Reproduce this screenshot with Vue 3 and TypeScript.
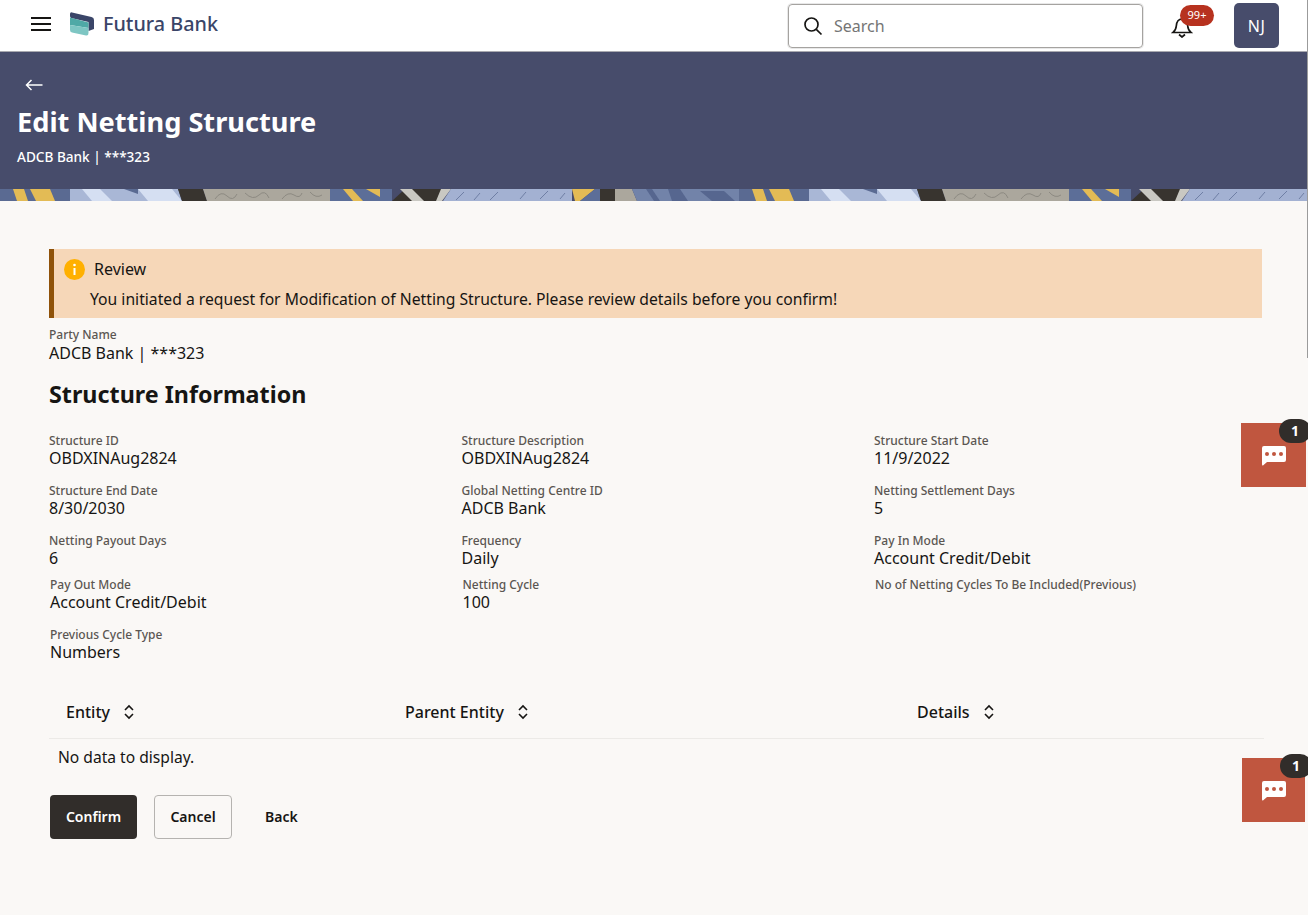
<script setup lang="ts">
interface Field {
  label: string;
  value: string;
}

interface Shape {
  points: string;
  fill: string;
}

const fieldsTop: Field[] = [
  { label: 'Structure ID', value: 'OBDXINAug2824' },
  { label: 'Structure Description', value: 'OBDXINAug2824' },
  { label: 'Structure Start Date', value: '11/9/2022' },
  { label: 'Structure End Date', value: '8/30/2030' },
  { label: 'Global Netting Centre ID', value: 'ADCB Bank' },
  { label: 'Netting Settlement Days', value: '5' },
  { label: 'Netting Payout Days', value: '6' },
  { label: 'Frequency', value: 'Daily' },
  { label: 'Pay In Mode', value: 'Account Credit/Debit' },
];

const fieldsBottom: Field[] = [
  { label: 'Pay Out Mode', value: 'Account Credit/Debit' },
  { label: 'Netting Cycle', value: '100' },
  { label: 'No of Netting Cycles To Be Included(Previous)', value: '' },
  { label: 'Previous Cycle Type', value: 'Numbers' },
];

const columns = ['Entity', 'Parent Entity', 'Details'];

// the banner strip repeats every 739px
const tileOffsets = [0, 739];

const tile: Shape[] = [
  { points: '0,0 70,0 70,12 0,12', fill: '#5a6a92' },
  { points: '13,0 24,0 28,12 17,12', fill: '#e3bb55' },
  { points: '30,0 50,0 55,12 36,12', fill: '#e3bb55' },
  { points: '70,0 178,0 182,12 70,12', fill: '#a9b7d6' },
  { points: '82,0 100,0 112,12 92,12', fill: '#d5dff2' },
  { points: '138,0 172,0 182,12 148,12', fill: '#d5dff2' },
  { points: '124,0 138,0 138,5', fill: '#5a6a92' },
  { points: '178,0 203,0 207,12 182,12', fill: '#38342f' },
  { points: '203,0 330,0 330,12 207,12', fill: '#aba79d' },
  { points: '330,0 392,0 392,12 330,12', fill: '#5c6e98' },
  { points: '343,0 352,0 363,12 353,12', fill: '#e3bb55' },
  { points: '366,0 380,0 380,8', fill: '#e3bb55' },
  { points: '392,12 405,0 445,0 442,12', fill: '#38342f' },
  { points: '400,0 412,0 424,12 412,12', fill: '#c9c8c2' },
  { points: '441,0 451,0 442,12 436,12', fill: '#c9c8c2' },
  { points: '451,0 572,0 572,12 443,12', fill: '#a3b1d2' },
  { points: '572,0 595,0 580,12 575,12', fill: '#e3bb55' },
  { points: '595,0 600,0 600,12 580,12', fill: '#5c6e98' },
  { points: '600,0 615,0 615,12 600,12', fill: '#38342f' },
  { points: '615,0 632,0 637,12 615,12', fill: '#aba79d' },
  { points: '632,0 739,0 739,12 637,12', fill: '#7283a9' },
  { points: '646,0 652,0 660,12 654,12', fill: '#56668f' },
  { points: '668,0 680,0 688,12 672,12', fill: '#56668f' },
  { points: '700,2 724,2 735,12 712,12', fill: '#56668f' },
];

// thin squiggles on the grey blocks and hatching on the pale blue ones
const squiggles = [
  'M215 10q6-9 12-3t10-2',
  'M245 4q8 8 14 2t10 3',
  'M282 10q6-8 12-4t8-2',
  'M310 3q6 7 12 3',
];
const hatches = [
  'M456 11l8-8',
  'M474 11l6-7',
  'M490 11l8-8',
  'M520 10l6-7',
  'M540 10l8-8',
  'M560 10l5-6',
];
</script>

<template>
  <div class="page">
    <header class="topbar">
      <button class="menu-btn" aria-label="Menu">
        <svg width="22" height="16" viewBox="0 0 22 16">
          <path d="M1 2h20M1 8h20M1 14h20" stroke="#161513" stroke-width="2" fill="none" />
        </svg>
      </button>
      <div class="brand">
        <svg class="brand-mark" width="24" height="24" viewBox="0 0 24 24">
          <path d="M0 2Q0 0 2 .4L21.500 5Q24 5.600 24 8V17L18.500 19V10L1 6Q0 5 0 4z" fill="#3a4568" />
          <path d="M0 5.500 18.500 10.500V16L0 13z" fill="#4fa9a6" />
          <path d="M0 13 18.500 16V21Q18.500 24 16 23.500L2 20.500Q0 20 0 18z" fill="#7ec6c3" />
        </svg>
        <span class="brand-name">Futura Bank</span>
      </div>
      <div class="search">
        <svg width="20" height="20" viewBox="0 0 20 20">
          <circle cx="8.500" cy="8.500" r="6.500" stroke="#161513" stroke-width="1.700" fill="none" />
          <path d="M13.300 13.300 18.500 18.500" stroke="#161513" stroke-width="1.700" fill="none" />
        </svg>
        <span class="search-text">Search</span>
      </div>
      <div class="bell">
        <svg width="22" height="24" viewBox="0 0 22 24">
          <path d="M2 18.500h18c-2-1.500-3-3-3.300-6.500-.3-4-2.300-7-5.700-7s-5.400 3-5.700 7c-.3 3.500-1.300 5-3.300 6.500z" stroke="#161513" stroke-width="1.700" fill="none" />
          <path d="M8 20.500l3 2.500 3-2.500" stroke="#161513" stroke-width="1.700" fill="none" />
        </svg>
        <span class="bell-badge">99+</span>
      </div>
      <div class="avatar">NJ</div>
    </header>

    <section class="hero">
      <div class="hero-body">
        <svg class="back-arrow" width="18" height="12" viewBox="0 0 18 12">
          <path d="M17.500 6H1.500M6.500 1 1.500 6l5 5" stroke="#fff" stroke-width="1.500" fill="none" />
        </svg>
        <h1 class="hero-title">Edit Netting Structure</h1>
        <p class="hero-sub">ADCB Bank | ***323</p>
      </div>
      <svg class="hero-strip" width="1308" height="12" viewBox="0 0 1308 12">
        <g v-for="x in tileOffsets" :key="x" :transform="`translate(${x} 0)`">
          <polygon v-for="(s, i) in tile" :key="i" :points="s.points" :fill="s.fill" />
          <path v-for="d in squiggles" :key="d" :d="d" stroke="#8d8a82" stroke-width="1" fill="none" />
          <path v-for="d in hatches" :key="d" :d="d" stroke="#6f7fa5" stroke-width="1" fill="none" />
        </g>
      </svg>
    </section>

    <main class="content">
      <div class="review">
        <div class="review-head">
          <svg width="21" height="21" viewBox="0 0 21 21">
            <circle cx="10.500" cy="10.500" r="10.500" fill="#ffb000" />
            <rect x="9.500" y="9" width="2" height="7" fill="#fff" />
            <circle cx="10.500" cy="6" r="1.300" fill="#fff" />
          </svg>
          <span>Review</span>
        </div>
        <p class="review-text">You initiated a request for Modification of Netting Structure. Please review details before you confirm!</p>
      </div>

      <div class="field party">
        <span class="field-label">Party Name</span>
        <span class="field-value">ADCB Bank | ***323</span>
      </div>

      <h2 class="section-title">Structure Information</h2>

      <div class="field-grid">
        <div v-for="f in fieldsTop" :key="f.label" class="field">
          <span class="field-label">{{ f.label }}</span>
          <span class="field-value">{{ f.value }}</span>
        </div>
      </div>
      <div class="field-grid field-grid-lower">
        <div v-for="f in fieldsBottom" :key="f.label" class="field">
          <span class="field-label">{{ f.label }}</span>
          <span class="field-value">{{ f.value }}</span>
        </div>
      </div>

      <div class="table">
        <div class="table-head">
          <div v-for="c in columns" :key="c" class="table-col">
            <span>{{ c }}</span>
            <svg width="12" height="16" viewBox="0 0 12 16">
              <path d="M2 6l4-4 4 4M2 10l4 4 4-4" stroke="#161513" stroke-width="1.600" fill="none" />
            </svg>
          </div>
        </div>
        <div class="table-empty">No data to display.</div>
      </div>

      <div class="actions">
        <button class="btn btn-primary">Confirm</button>
        <button class="btn btn-outline">Cancel</button>
        <button class="btn btn-ghost">Back</button>
      </div>
    </main>

    <div class="chat chat-top">
      <svg width="26" height="21" viewBox="0 0 26 21">
        <path d="M3 1h20q2 0 2 2v12q0 2-2 2H6l-4 3.500Q1 21 1 19V3q0-2 2-2z" fill="#fff" />
        <circle cx="6" cy="9" r="2" fill="#c0563f" />
        <circle cx="13" cy="9" r="2" fill="#c0563f" />
        <circle cx="20" cy="9" r="2" fill="#c0563f" />
      </svg>
      <span class="chat-badge">1</span>
    </div>
    <div class="chat chat-bottom">
      <svg width="26" height="21" viewBox="0 0 26 21">
        <path d="M3 1h20q2 0 2 2v12q0 2-2 2H6l-4 3.500Q1 21 1 19V3q0-2 2-2z" fill="#fff" />
        <circle cx="6" cy="9" r="2" fill="#c0563f" />
        <circle cx="13" cy="9" r="2" fill="#c0563f" />
        <circle cx="20" cy="9" r="2" fill="#c0563f" />
      </svg>
      <span class="chat-badge">1</span>
    </div>
    <div class="scroll-thumb"></div>
  </div>
</template>

<style>
html,
body {
  margin: 0;
  background: #faf8f6;
}
</style>

<style scoped>
.page {
  position: relative;
  width: 1308px;
  height: 915px;
  overflow: hidden;
  font-family: 'Noto Sans', 'Open Sans', sans-serif;
  color: #161513;
  background: #faf8f6;
}

.topbar {
  height: 51px;
  display: flex;
  align-items: center;
  background: #fff;
  border-bottom: 1px solid #a9a9b0;
  padding-left: 30px;
  padding-right: 29px;
}

.menu-btn {
  width: 22px;
  height: 16px;
  padding: 0;
  border: none;
  background: none;
  display: flex;
  margin-top: -3px;
}

.brand {
  display: flex;
  align-items: center;
  gap: 9px;
  margin-left: 18px;
  margin-top: -4px;
}

.brand-name {
  font-size: 19.800px;
  font-weight: 500;
  color: #3a4568;
}

.search {
  width: 355px;
  height: 44px;
  box-sizing: border-box;
  margin-left: auto;
  display: flex;
  align-items: center;
  gap: 11px;
  padding-left: 14px;
  border: 1px solid #a5a3a0;
  border-radius: 4px;
  box-shadow: 0 0 0 1px #e8e8e8;
}

.search-text {
  font-size: 16px;
  color: #757575;
}

.bell {
  position: relative;
  width: 22px;
  height: 24px;
  margin-left: 28px;
}

.bell-badge {
  position: absolute;
  left: 9px;
  top: -9px;
  width: 34px;
  height: 21px;
  border-radius: 11px;
  background: #b7321f;
  color: #fff;
  font-size: 11px;
  line-height: 20px;
  text-align: center;
}

.avatar {
  width: 45px;
  height: 45px;
  margin-left: 41px;
  border-radius: 5px;
  background: #474c6b;
  color: #fff;
  font-size: 16px;
  letter-spacing: 0.5px;
  display: flex;
  align-items: center;
  justify-content: center;
}

.hero {
  background: #474c6b;
  color: #fff;
}

.hero-body {
  height: 137px;
  box-sizing: border-box;
  padding: 27px 17px 0;
}

.back-arrow {
  display: block;
  margin-left: 8px;
}

.hero-title {
  margin: 11px 0 0;
  font-size: 27.200px;
  line-height: 40px;
  font-weight: 700;
}

.hero-sub {
  margin: 5px 0 0;
  font-size: 13.600px;
  line-height: 20px;
  font-weight: 500;
}

.hero-strip {
  display: block;
}

.content {
  padding: 48px 44px 0 49px;
}

.review {
  height: 69px;
  box-sizing: border-box;
  border-left: 5px solid #8f5209;
  background: #f6d7b8;
  padding-top: 9px;
  padding-left: 10px;
  margin-right: 2px;
}

.review-head {
  display: flex;
  align-items: center;
  gap: 9px;
  font-size: 16px;
  line-height: 22px;
}

.review-text {
  margin: 8px 0 0 26px;
  font-size: 15.700px;
  line-height: 22px;
}

.field {
  display: flex;
  flex-direction: column;
  height: 50px;
}

.party {
  margin-top: 9px;
  height: auto;
}

.field-label {
  font-size: 12px;
  line-height: 16px;
  font-weight: 500;
  color: #5b5652;
}

.field-value {
  font-size: 16px;
  line-height: 20px;
}

.section-title {
  margin: 14px 0 0;
  font-size: 23.300px;
  line-height: 34px;
  font-weight: 700;
}

.field-grid {
  display: grid;
  grid-template-columns: repeat(3, 412.500px);
  margin-top: 22px;
}

.field-grid .field-value {
  margin-top: -1px;
}

.field-grid-lower {
  margin-top: -6px;
  padding-left: 1px;
}

.table {
  width: 1215px;
  margin-top: 8px;
}

.table-head {
  height: 54px;
  display: grid;
  grid-template-columns: 339px 512px 1fr;
  padding-left: 17px;
  border-bottom: 1px solid #eceae7;
  box-sizing: border-box;
}

.table-col {
  display: flex;
  align-items: center;
  gap: 13px;
  font-size: 16px;
  font-weight: 500;
}

.table-empty {
  padding-left: 9px;
  font-size: 15.600px;
  line-height: 36px;
}

.actions {
  display: flex;
  align-items: center;
  margin-top: 20px;
  margin-left: 1px;
}

.btn {
  height: 44px;
  font-family: inherit;
  font-size: 14px;
  font-weight: 600;
  border-radius: 4px;
  color: #161513;
  background: none;
  border: none;
  padding: 0 0 2px;
}

.btn-primary {
  width: 87px;
  background: #312d2a;
  color: #fff;
}

.btn-outline {
  width: 78px;
  margin-left: 17px;
  border: 1px solid #b5b3b0;
}

.btn-ghost {
  margin-left: 33px;
}

.chat {
  position: absolute;
  height: 64px;
  background: #c0563f;
  display: flex;
  align-items: center;
  justify-content: center;
}

.chat-top {
  top: 423px;
  left: 1241px;
  width: 65px;
}

.chat-bottom {
  top: 758px;
  left: 1242px;
  width: 63px;
}

.chat-badge {
  position: absolute;
  top: -4px;
  left: 38px;
  width: 32px;
  height: 24px;
  border-radius: 12px;
  background: #312d2a;
  color: #fff;
  font-size: 14px;
  font-weight: 700;
  line-height: 24px;
  text-align: center;
}

.scroll-thumb {
  position: absolute;
  top: 0;
  right: 0;
  width: 1px;
  height: 358px;
  background: #9b9b9b;
}
</style>
